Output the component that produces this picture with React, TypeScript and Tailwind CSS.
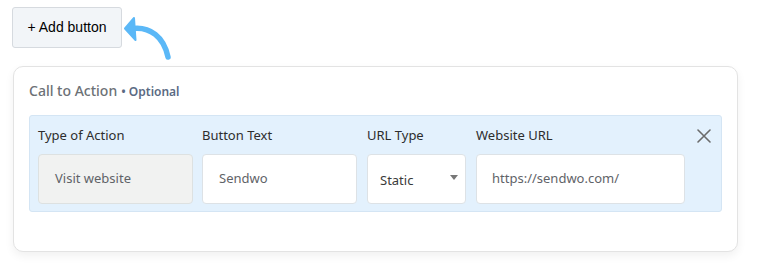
import React from "react";

const font = { fontFamily: '"Noto Sans", "Open Sans", sans-serif' };

function Field({ label, width, children }: { label: string; width: string; children: React.ReactNode }) {
  return (
    <div className={`flex flex-col ${width}`}>
      <span className="h-[38px] pt-[10px] text-[13px] leading-[18px] text-[#2d2d2d]">{label}</span>
      {children}
    </div>
  );
}

export default function App() {
  return (
    <div className="w-[773px] h-[268px] bg-white px-3 pt-[7px] overflow-hidden" style={font}>
      {/* Add button + arrow */}
      <div className="relative h-[41px]">
        <button className="h-[41px] w-[110px] rounded-[3px] border border-[#d6dadf] bg-[#f2f5f8] text-[14px] text-black" style={{ fontFamily: '"Liberation Sans", Arial, sans-serif' }}>
          + Add button
        </button>
        <svg className="absolute left-[111px] top-[8px]" width="52" height="48" viewBox="0 0 52 48" fill="none">
          <path d="M9 13.5 C27 11 41 22 45 42" stroke="#5bb8f7" strokeWidth="5.5" strokeLinecap="round" />
          <path d="M2 13.5 L11 3 L12.5 25 Z" fill="#5bb8f7" stroke="#5bb8f7" strokeWidth="2" strokeLinejoin="round" />
        </svg>
      </div>

      {/* Card */}
      <div className="mt-[18px] ml-px w-[725px] h-[186px] rounded-[10px] border border-[#e3e3e3] bg-white shadow-[0_4px_10px_rgba(0,0,0,0.06)] px-[15px] pt-[13px]">
        <div className="flex items-baseline gap-1 h-[35px]">
          <span className="text-[14px] font-medium text-[#6c7176]">Call to Action</span>
          <span className="text-[12px] font-semibold text-[#5a6a83]">• Optional</span>
        </div>

        <div className="flex w-[693px] h-[97px] rounded-[3px] border border-[#d4e5f4] bg-[#e3f1fd] pl-2">
          <Field label="Type of Action" width="w-[155px]">
            <div className="h-[50px] rounded-[4px] border border-[#dde1e1] bg-[#f1f2f1] flex items-center px-4 text-[13px] text-[#5f6368]">
              Visit website
            </div>
          </Field>
          <Field label="Button Text" width="w-[155px] ml-[9px]">
            <div className="h-[50px] rounded-[4px] border border-[#dde2e6] bg-white flex items-center px-4 text-[13px] text-[#5f6368]">
              Sendwo
            </div>
          </Field>
          <Field label="URL Type" width="w-[99px] ml-[10px]">
            <div className="h-[50px] rounded-[4px] border border-[#dde2e6] bg-white flex items-center justify-between pl-3 pr-[7px] text-[13px] text-[#3a3a3a]">
              <span className="pt-[3px]">Static</span>
              <svg width="8" height="5" viewBox="0 0 8 5" className="-mt-[4px]">
                <path d="M0 0 H8 L4 5 Z" fill="#777" />
              </svg>
            </div>
          </Field>
          <Field label="Website URL" width="w-[209px] ml-[10px]">
            <div className="h-[50px] rounded-[4px] border border-[#dde2e6] bg-white flex items-center px-[15px] text-[13px] text-[#5f6368]">
              https://sendwo.com/
            </div>
          </Field>
          <div className="ml-[12px] pt-[13px]">
            <svg width="14" height="14" viewBox="0 0 14 14">
              <path d="M1 1 L13 13 M13 1 L1 13" stroke="#6b6b6b" strokeWidth="1.6" strokeLinecap="round" />
            </svg>
          </div>
        </div>
      </div>
    </div>
  );
}
